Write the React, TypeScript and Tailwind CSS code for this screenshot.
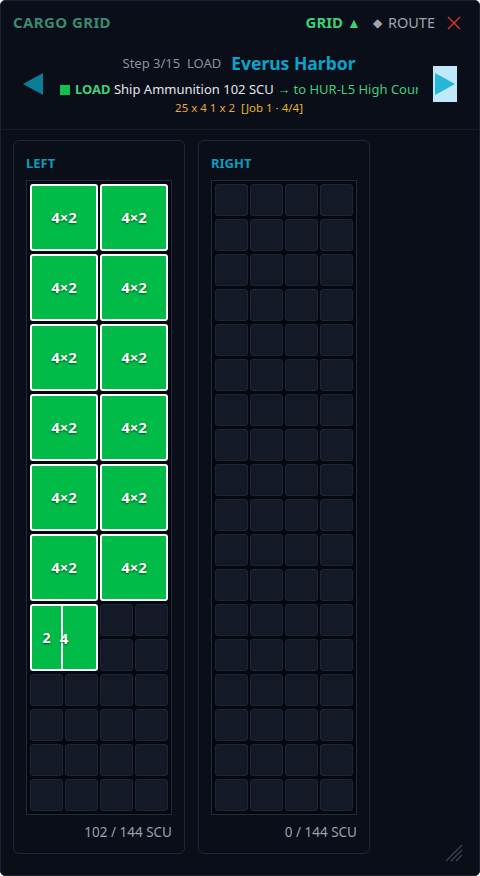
import React from "react";

const ROWS = 18;

function EmptyCell() {
  return <div className="rounded-[3px] bg-[#131926] border border-[#1e2636]" />;
}

function Block({ label }: { label: string }) {
  return (
    <div className="col-span-2 row-span-2 rounded-[3px] bg-[#00bb48] border-2 border-white flex items-center justify-center">
      <span className="text-white font-bold text-[15px] [text-shadow:0_1px_2px_rgba(0,0,0,0.6)]">
        {label}
      </span>
    </div>
  );
}

function SplitBlock() {
  return (
    <div className="col-span-2 row-span-2 relative rounded-[3px] bg-[#00bb48] border-2 border-white flex items-center justify-center">
      <div className="absolute left-0 top-0 bottom-0 w-[31px] border-r-2 border-white flex items-center justify-center">
        <span className="text-white font-bold text-[14px] [text-shadow:0_1px_2px_rgba(0,0,0,0.6)]">
          2
        </span>
      </div>
      <span className="relative mt-[2px] text-white font-bold text-[15px] [text-shadow:0_1px_2px_rgba(0,0,0,0.6)]">
        4
      </span>
    </div>
  );
}

function CargoGrid({ filled }: { filled: boolean }) {
  const items: React.ReactNode[] = [];
  let emptyCount = ROWS * 4;
  if (filled) {
    for (let i = 0; i < 12; i++) items.push(<Block key={`b${i}`} label="4×2" />);
    items.push(<SplitBlock key="split" />);
    emptyCount = ROWS * 4 - 13 * 4;
  }
  for (let i = 0; i < emptyCount; i++) items.push(<EmptyCell key={`e${i}`} />);

  return (
    <div className="grid grid-cols-[repeat(4,33px)] grid-rows-[repeat(18,32px)] gap-x-[2px] gap-y-[3px] p-[3px] border border-[#222a39] bg-[#05080e] w-fit">
      {items}
    </div>
  );
}

function Panel({ title, used, filled }: { title: string; used: string; filled: boolean }) {
  return (
    <div className="w-[172px] h-[714px] rounded-[6px] border border-[#1f2736] pl-[12px] pt-[14px] flex flex-col">
      <div className="text-[13px] leading-[16px] font-bold text-[#0e9bbb]">{title}</div>
      <div className="mt-[9px]">
        <CargoGrid filled={filled} />
      </div>
      <div className="w-[146px] mt-[8px] text-right text-[13.5px] leading-[18px] text-[#9aa1ad]">
        {used}
      </div>
    </div>
  );
}

export default function App() {
  return (
    <div className="w-[480px] h-[876px] relative bg-[#0a0e18] border border-[#1b2130] rounded-[5px] flex flex-col font-['Noto_Sans',sans-serif] overflow-hidden">
      {/* header */}
      <div className="h-[43px] shrink-0 pl-[12px] pr-[18px] flex items-center justify-between">
        <div className="text-[15px] font-bold tracking-[0.4px] text-[#3b8a6f]">CARGO GRID</div>
        <div className="flex items-center">
          <span className="text-[15px] font-bold text-[#3ecf7c]">GRID</span>
          <span className="ml-[4px] text-[14px] text-[#3ecf7c]">▲</span>
          <span className="ml-[12px] text-[12px] text-[#a0a6b0]">◆</span>
          <span className="ml-[6px] text-[14.5px] text-[#9ca3af]">ROUTE</span>
          <svg className="ml-[12px]" width="14" height="14" viewBox="0 0 14 14">
            <path d="M1 1 L13 13 M13 1 L1 13" stroke="#d9322e" strokeWidth="1.4" />
          </svg>
        </div>
      </div>

      {/* step navigation */}
      <div className="shrink-0 flex items-center pl-[22px] pr-[22px] pt-[8px] pb-[13px] border-b border-[#141b27]">
        <svg width="20" height="22" viewBox="0 0 20 22" className="shrink-0">
          <path d="M0 11 L20 0 L20 22 Z" fill="#0b7d95" />
        </svg>
        <div className="ml-[17px] w-[358px] min-w-0 text-center">
          <div className="flex items-center justify-center leading-[22px]">
            <span className="text-[13px] text-[#8a919d]">Step 3/15&nbsp;&nbsp;LOAD</span>
            <span className="ml-[10px] text-[17.5px] font-bold text-[#0ba3c8]">Everus Harbor</span>
          </div>
          <div className="mt-[5px] overflow-hidden whitespace-nowrap text-[13px] leading-[20px]">
            <span className="inline-block w-[10px] h-[10px] bg-[#10c050] mr-[5px] align-[-1px]" />
            <span className="font-bold text-[#3ecf7c]">LOAD</span>
            <span className="text-[#e3e6ea]"> Ship Ammunition 102 SCU </span>
            <span className="text-[#3ecf7c]">→ to HUR-L5 High Course Station</span>
          </div>
          <div className="mt-[1px] text-[11.5px] leading-[16px]">
            <span className="text-[#eea63a]">25 x 4 1 x 2</span>
            <span className="ml-[6px] text-[#e3b521]">[Job 1 · 4/4]</span>
          </div>
        </div>
        <div className="ml-[15px] w-[24px] h-[36px] shrink-0 bg-[#bfe8fb] flex items-center justify-center">
          <svg width="20" height="22" viewBox="0 0 20 22">
            <path d="M0 0 L20 11 L0 22 Z" fill="#26b7d8" />
          </svg>
        </div>
      </div>

      {/* holds */}
      <div className="flex gap-[13px] pl-[12px] pt-[10px]">
        <Panel title="LEFT" used="102 / 144 SCU" filled />
        <Panel title="RIGHT" used="0 / 144 SCU" filled={false} />
      </div>

      {/* resize grip */}
      <svg className="absolute right-[16px] bottom-[13px]" width="18" height="18" viewBox="0 0 18 18">
        <path d="M1 17 L17 1 M6 17 L17 6 M11 17 L17 11" stroke="#3a4150" strokeWidth="1.3" />
      </svg>
    </div>
  );
}
